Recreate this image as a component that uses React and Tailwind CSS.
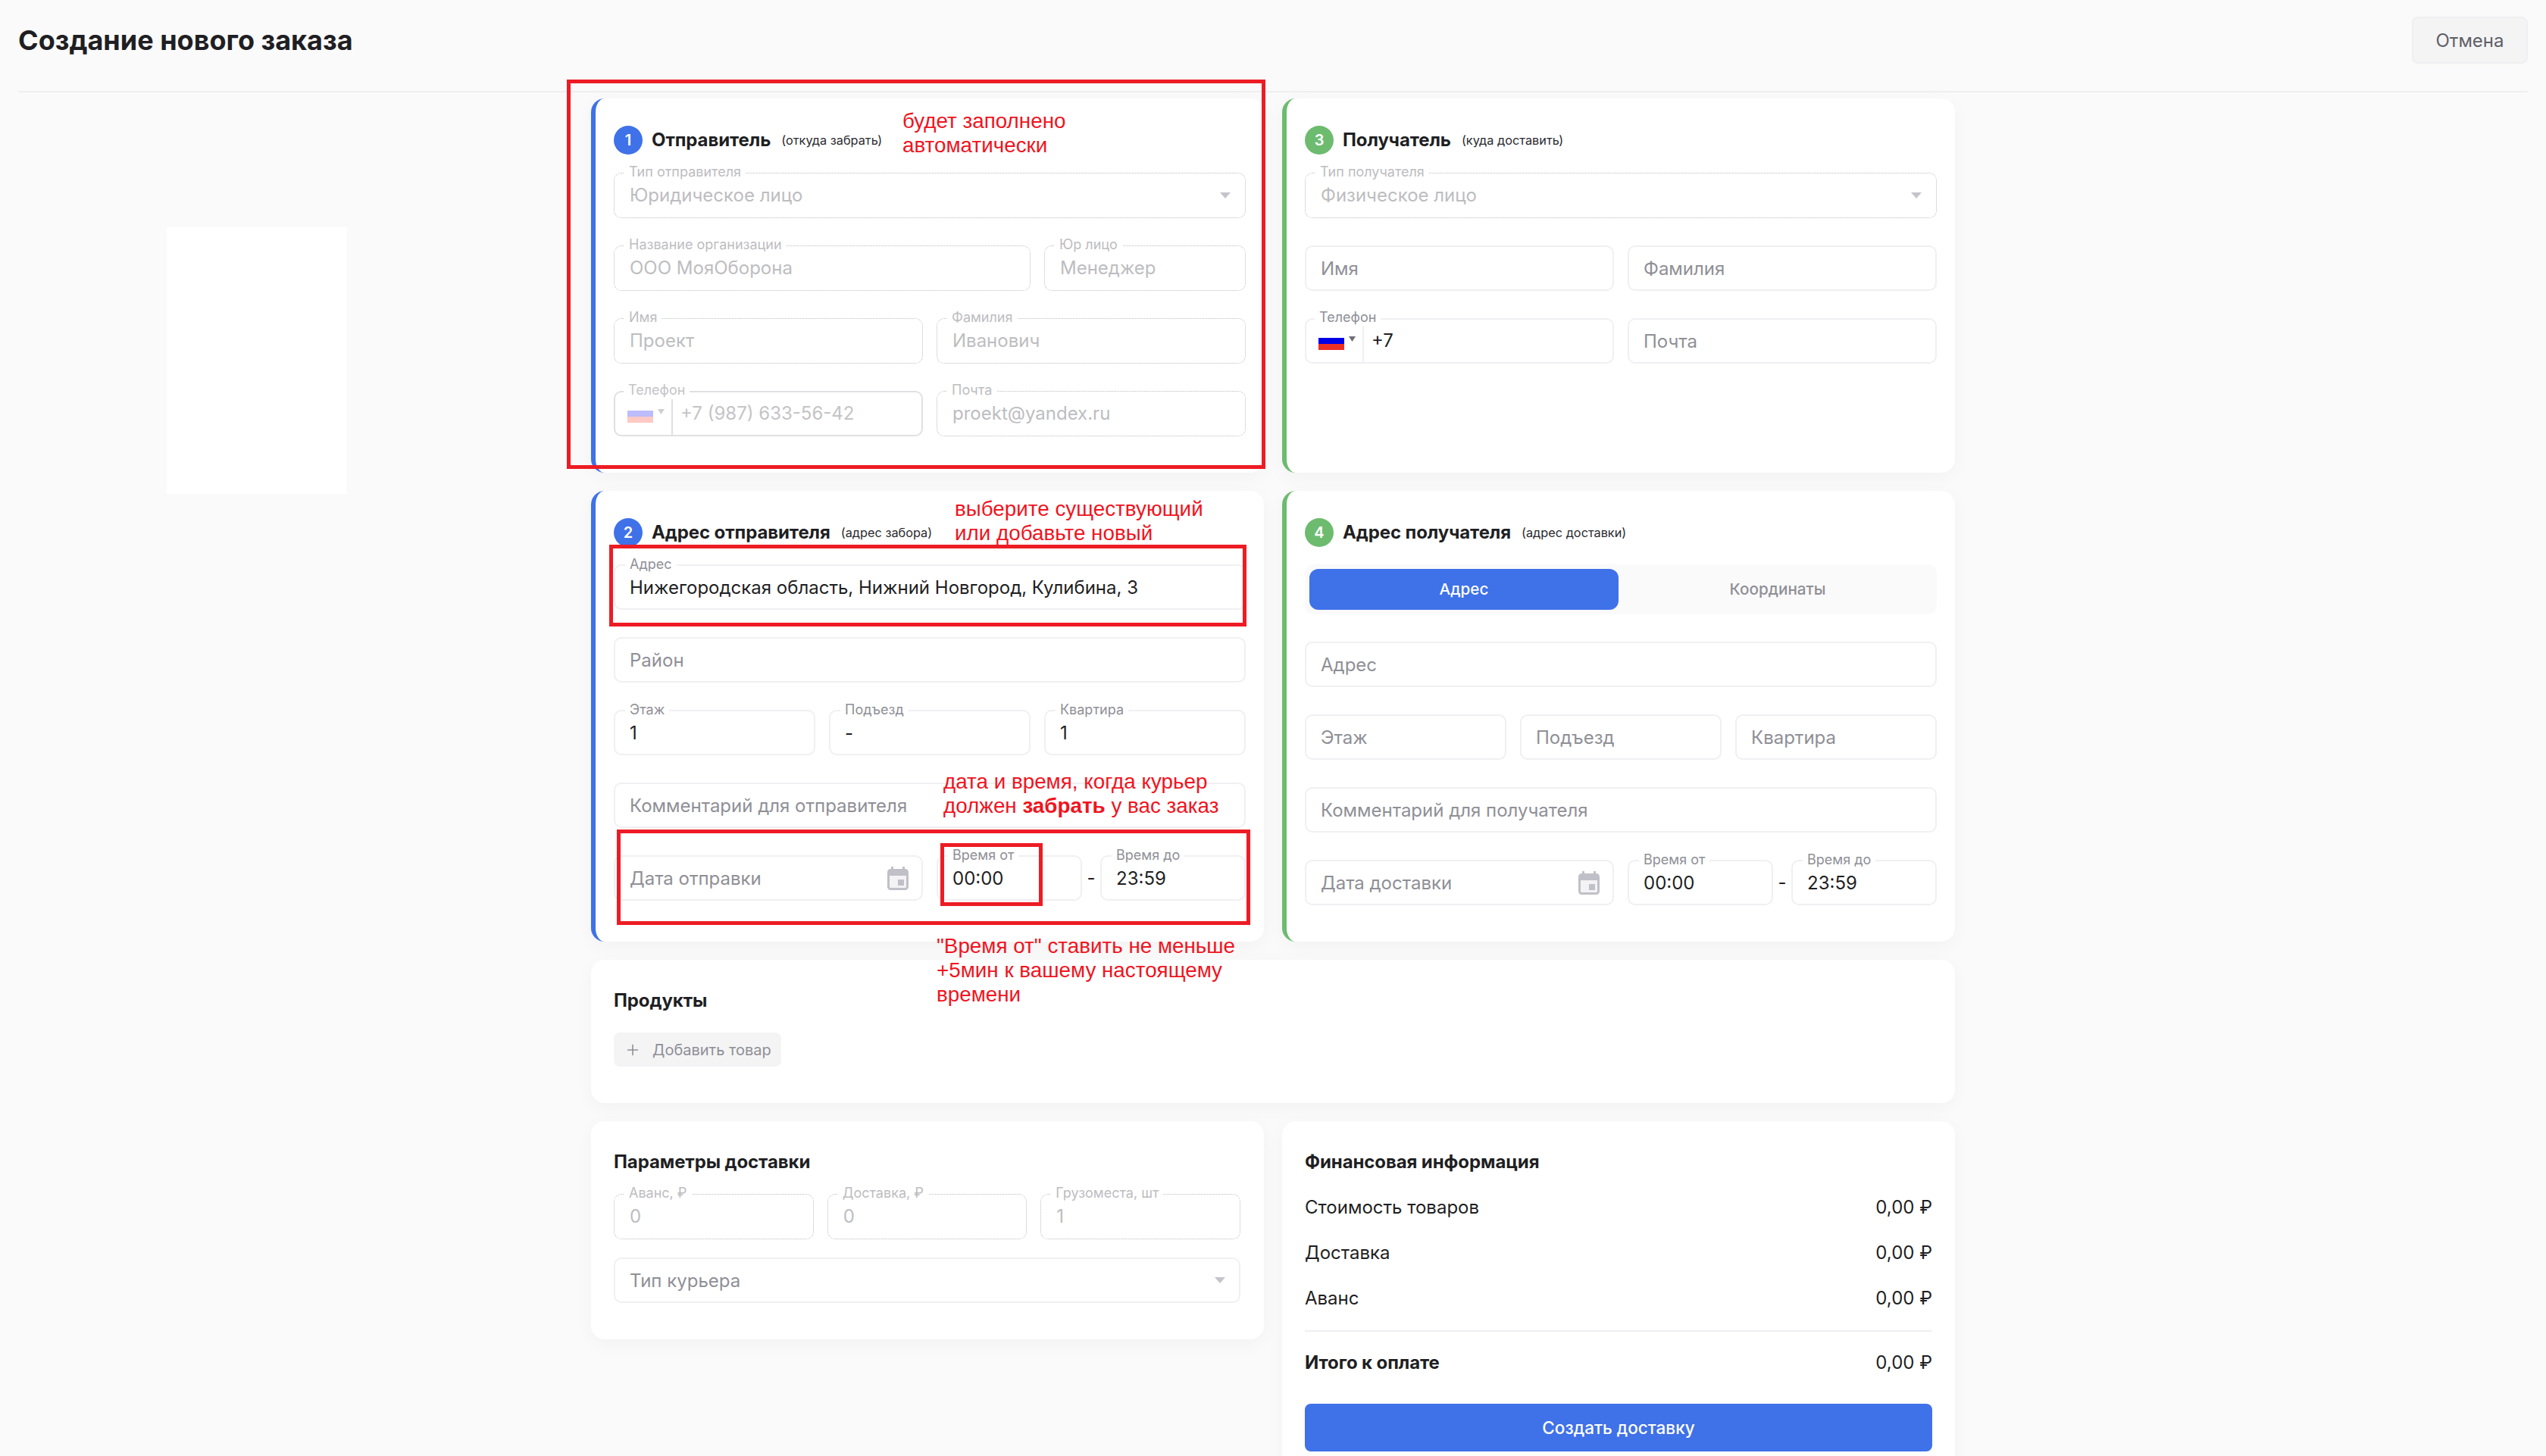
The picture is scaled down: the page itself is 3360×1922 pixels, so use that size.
import React from "react";
import clsx from "clsx";
import { Plus } from "lucide-react";

const Flag = ({ faded }) => (
  <svg width="34" height="24" viewBox="0 0 34 24" className="shrink-0">
    <rect width="34" height="8" fill="#ffffff" />
    <rect y="8" width="34" height="8" fill={faded ? "#bcbcff" : "#0000e6"} />
    <rect y="16" width="34" height="8" fill={faded ? "#ffc9c4" : "#ee2f24"} />
  </svg>
);

const Arrow = ({ color = "#c4c4cc", small }) => (
  <svg
    width={small ? 9 : 14}
    height={small ? 7 : 8}
    viewBox="0 0 14 8"
    preserveAspectRatio="none"
    className="shrink-0"
  >
    <path d="M0 0h14L7 8z" fill={color} />
  </svg>
);

const CalendarIcon = () => (
  <svg width="28" height="31" viewBox="0 0 28 31" className="-mr-[1px] shrink-0">
    <rect x="5" y="0" width="3" height="6" fill="#c0c0c8" />
    <rect x="20" y="0" width="3" height="6" fill="#c0c0c8" />
    <rect x="1.5" y="4.5" width="25" height="25" rx="3" fill="#f3f3f5" stroke="#c0c0c8" strokeWidth="3" />
    <rect x="1" y="4" width="26" height="8" fill="#c0c0c8" />
    <rect x="14" y="17" width="8" height="8" fill="#c0c0c8" />
  </svg>
);

// поле формы с подписью на рамке
const Field = ({ label, value, placeholder, disabled, className, children }) => (
  <div
    className={clsx(
      "relative flex h-[60px] items-center justify-between rounded-[10px] text-[24px]",
      disabled
        ? "border border-dotted border-[#bcbcbc] pl-[20px] pr-[19px] text-[#bdbdc0]"
        : "border-2 border-[#f0f0f3] pl-[19px] pr-[18px]",
      !disabled && value && "text-[#1f1f23]",
      !disabled && !value && "text-[#8f8f96]",
      className
    )}
  >
    {label && (
      <span
        className={clsx(
          "absolute -top-[14px] left-[13px] bg-white px-[6px] text-[18px] leading-[24px]",
          disabled ? "text-[#bdbdc0]" : "text-[#8f8f96]"
        )}
      >
        {label}
      </span>
    )}
    <span className={clsx(!disabled && "pt-[2px]")}>{value || placeholder}</span>
    {children}
  </div>
);

const PhoneField = ({ value, disabled }) => (
  <div
    className={clsx(
      "relative flex h-[60px] rounded-[10px] border-2 text-[24px]",
      disabled ? "border-[#e0e0e2] text-[#c4c4c6]" : "border-[#f0f0f3] text-[#1f1f23]"
    )}
  >
    <span
      className={clsx(
        "absolute -top-[15px] left-[11px] bg-white px-[6px] text-[18px] leading-[24px]",
        disabled ? "text-[#c4c4c6]" : "text-[#8f8f96]"
      )}
    >
      Телефон
    </span>
    <div
      className={clsx(
        "mt-[9px] flex w-[76px] shrink-0 items-start gap-[6px] border-r-2 pl-[16px] pt-[7px]",
        disabled ? "border-[#e0e0e2]" : "border-[#f0f0f3]"
      )}
    >
      <Flag faded={disabled} />
      <div className="pt-[6px]">
        <Arrow small color={disabled ? "#cfcfd3" : "#6f6f76"} />
      </div>
    </div>
    <div className="flex items-center pl-[10px]">{value}</div>
  </div>
);

const Card = ({ color, className, children }) => (
  <div
    className={clsx(
      "rounded-[18px] bg-white shadow-[0_6px_24px_rgba(0,0,0,0.035)]",
      color === "blue" && "border-l-[6px] border-[#3f71e8] pb-[48px] pl-[24px] pr-[24px] pt-[36px]",
      color === "green" && "border-l-[6px] border-[#6dbb6f] pb-[48px] pl-[24px] pr-[24px] pt-[36px]",
      className
    )}
  >
    {children}
  </div>
);

const CardHeader = ({ num, color, title, note, mb }) => (
  <div className={clsx("flex items-center", mb)}>
    <div
      className={clsx(
        "flex h-[38px] w-[38px] items-center justify-center rounded-full text-[20px] font-semibold text-white",
        color
      )}
    >
      {num}
    </div>
    <div className="ml-[12px] text-[24px] font-bold tracking-[-0.1px] text-[#1f1f23]">{title}</div>
    <div className="ml-[14px] text-[16.3px] text-[#2a2a2e]">{note}</div>
  </div>
);

const TimeRow = ({ dateLabel, icon }) => (
  <div className="flex items-center">
    <Field className="w-[408px]" placeholder={dateLabel}>
      {icon}
    </Field>
    <Field className="ml-[18px] w-[192px]" label="Время от" value="00:00" />
    <div className="w-[24px] text-center text-[24px] text-[#1f1f23]">-</div>
    <Field className="w-[192px]" label="Время до" value="23:59" />
  </div>
);

const Row = ({ label, value, bold }) => (
  <div className="flex h-[30px] items-center justify-between text-[24px] text-[#1f1f23]">
    <span className={clsx(bold && "font-bold tracking-[-0.1px]")}>{label}</span>
    <span>{value}</span>
  </div>
);

const App = () => {
  return (
    <div className="relative h-[1922px] overflow-hidden bg-[#fafafa] font-['Inter',sans-serif]">
      <header className="mx-[24px] flex h-[122px] items-start justify-between border-b-2 border-[#efeff1] pt-[22px]">
        <h1 className="flex h-[62px] items-center text-[36px] font-bold text-[#1f1f23]">
          Создание нового заказа
        </h1>
        <button className="h-[62px] w-[153px] rounded-[8px] border-2 border-[#efeff1] bg-[#f4f4f5] pt-[2px] text-[24px] text-[#5f5f66]">
          Отмена
        </button>
      </header>

      <div className="mt-[8px] flex pl-[220px]">
        <div className="mt-[170px] h-[352px] w-[238px] shrink-0 bg-white" />

        <main className="ml-[322px] grid w-[1800px] shrink-0 grid-cols-2 gap-[24px]">
          <Card color="blue">
            <CardHeader num="1" color="bg-[#3f71e8]" title="Отправитель" note="(откуда забрать)" mb="mb-[24px]" />
            <div className="flex flex-col gap-[36px]">
              <Field disabled label="Тип отправителя" value="Юридическое лицо">
                <Arrow />
              </Field>
              <div className="flex gap-[18px]">
                <Field disabled className="flex-1" label="Название организации" value="ООО МояОборона" />
                <Field disabled className="w-[266px]" label="Юр лицо" value="Менеджер" />
              </div>
              <div className="grid grid-cols-2 gap-[18px]">
                <Field disabled label="Имя" value="Проект" />
                <Field disabled label="Фамилия" value="Иванович" />
              </div>
              <div className="grid grid-cols-2 gap-[18px]">
                <PhoneField disabled value="+7 (987) 633-56-42" />
                <Field disabled label="Почта" value="proekt@yandex.ru" />
              </div>
            </div>
          </Card>

          <Card color="green">
            <CardHeader num="3" color="bg-[#6dbb6f]" title="Получатель" note="(куда доставить)" mb="mb-[24px]" />
            <div className="flex flex-col gap-[36px]">
              <Field disabled label="Тип получателя" value="Физическое лицо">
                <Arrow />
              </Field>
              <div className="grid grid-cols-2 gap-[18px]">
                <Field placeholder="Имя" />
                <Field placeholder="Фамилия" />
              </div>
              <div className="grid grid-cols-2 gap-[18px]">
                <PhoneField value="+7" />
                <Field placeholder="Почта" />
              </div>
            </div>
          </Card>

          <Card color="blue" className="!pb-[54px]">
            <CardHeader num="2" color="bg-[#3f71e8]" title="Адрес отправителя" note="(адрес забора)" mb="mb-[23px]" />
            <div className="flex flex-col gap-[36px]">
              <Field label="Адрес" value="Нижегородская область, Нижний Новгород, Кулибина, 3" />
              <Field placeholder="Район" />
              <div className="grid grid-cols-3 gap-[18px]">
                <Field label="Этаж" value="1" />
                <Field label="Подъезд" value="-" />
                <Field label="Квартира" value="1" />
              </div>
              <Field placeholder="Комментарий для отправителя" />
              <TimeRow dateLabel="Дата отправки" icon={<CalendarIcon />} />
            </div>
          </Card>

          <Card color="green">
            <CardHeader num="4" color="bg-[#6dbb6f]" title="Адрес получателя" note="(адрес доставки)" mb="mb-[23px]" />
            <div className="mb-[36px] grid h-[66px] grid-cols-2 gap-[6px] rounded-[12px] bg-[#fafafa] p-[6px] text-[20.7px]">
              <div className="flex items-center justify-center rounded-[12px] bg-[#3f71e8] font-medium text-white">Адрес</div>
              <div className="flex items-center justify-center font-medium text-[#8f8f96]">Координаты</div>
            </div>
            <div className="flex flex-col gap-[36px]">
              <Field placeholder="Адрес" />
              <div className="grid grid-cols-3 gap-[18px]">
                <Field placeholder="Этаж" />
                <Field placeholder="Подъезд" />
                <Field placeholder="Квартира" />
              </div>
              <Field placeholder="Комментарий для получателя" />
              <TimeRow dateLabel="Дата доставки" icon={<CalendarIcon />} />
            </div>
          </Card>

          <Card className="col-span-2 px-[30px] pb-[48px] pt-[40px]">
            <div className="mb-[28px] text-[24px] font-bold leading-[28px] tracking-[-0.1px] text-[#1f1f23]">Продукты</div>
            <button className="flex h-[45px] w-[221px] items-center rounded-[8px] bg-[#f4f4f5] pl-[14px] text-[20px] text-[#8f8f96]">
              <Plus size={22} strokeWidth={1.75} />
              <span className="ml-[15px]">Добавить товар</span>
            </button>
          </Card>

          <Card className="self-start py-[48px] pl-[30px] pr-[31px] !pt-[40px]">
            <div className="mb-[28px] text-[24px] font-bold leading-[28px] tracking-[-0.1px] text-[#1f1f23]">Параметры доставки</div>
            <div className="flex flex-col gap-[24px]">
              <div className="grid grid-cols-3 gap-[18px]">
                <Field disabled label="Аванс, ₽" value="0" />
                <Field disabled label="Доставка, ₽" value="0" />
                <Field disabled label="Грузоместа, шт" value="1" />
              </div>
              <Field placeholder="Тип курьера">
                <Arrow />
              </Field>
            </div>
          </Card>

          <Card className="px-[30px] pb-[30px] pt-[40px]">
            <div className="mb-[31px] text-[24px] font-bold leading-[28px] tracking-[-0.1px] text-[#1f1f23]">Финансовая информация</div>
            <div className="flex flex-col gap-[30px]">
              <Row label="Стоимость товаров" value="0,00 ₽" />
              <Row label="Доставка" value="0,00 ₽" />
              <Row label="Аванс" value="0,00 ₽" />
            </div>
            <div className="mb-[26px] mt-[27px] border-t-2 border-[#efeff1]" />
            <Row bold label="Итого к оплате" value="0,00 ₽" />
            <button className="mt-[39px] h-[63px] w-full rounded-[8px] bg-[#3f71e8] text-[22.5px] font-medium text-white">
              Создать доставку
            </button>
          </Card>
        </main>
      </div>

      {/* пометки поверх скриншота */}
      <div className="pointer-events-none absolute inset-0 font-['Liberation_Sans',sans-serif] text-[27.8px] leading-[32px] text-[#f0141e]">
        <div className="absolute left-[748px] top-[105px] h-[514px] w-[922px] border-[5px] border-[#ed1c24]" />
        <div className="absolute left-[804px] top-[719px] h-[108px] w-[841px] border-[5px] border-[#ed1c24]" />
        <div className="absolute left-[814px] top-[1095px] h-[126px] w-[836px] border-[5px] border-[#ed1c24]" />
        <div className="absolute left-[1241px] top-[1113px] h-[83px] w-[135px] border-[5px] border-[#ed1c24]" />

        <div className="absolute left-[1191px] top-[144px]">
          будет заполнено
          <br />
          автоматически
        </div>
        <div className="absolute left-[1260px] top-[656px]">
          выберите существующий
          <br />
          или добавьте новый
        </div>
        <div className="absolute left-[1245px] top-[1016px]">
          дата и время, когда курьер
          <br />
          должен <span className="font-bold">забрать</span> у вас заказ
        </div>
        <div className="absolute left-[1236px] top-[1233px]">
          "Время от" ставить не меньше
          <br />
          +5мин к вашему настоящему
          <br />
          времени
        </div>
      </div>
    </div>
  );
};

export default App;
